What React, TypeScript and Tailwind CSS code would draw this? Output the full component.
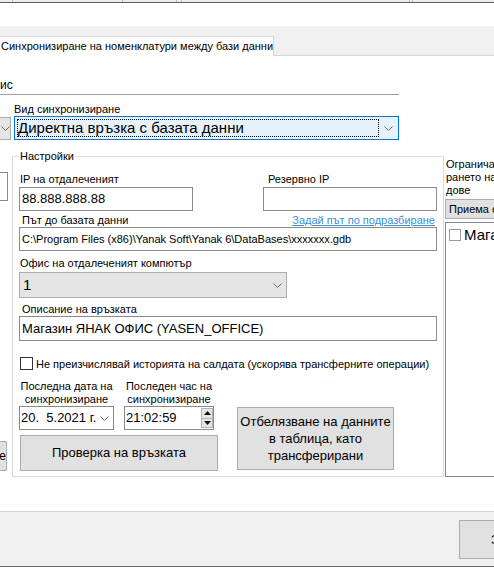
import React from 'react';

const Chevron = ({ className = '' }: { className?: string }) => (
  <svg width="9" height="5" viewBox="0 0 9 5" className={className}>
    <polyline points="0.5,0.5 4.5,4.5 8.5,0.5" fill="none" stroke="#6a6a6a" strokeWidth="1" />
  </svg>
);

const Spinner = () => (
  <div className="w-[12px] h-[20px] flex flex-col border border-[#b5b5b5]">
    <div className="flex-1 bg-[#e6e6e6] border-b border-[#b5b5b5] flex items-center justify-center">
      <svg width="7" height="4" viewBox="0 0 7 4">
        <polygon points="0,4 3.5,0 7,4" fill="#111" />
      </svg>
    </div>
    <div className="flex-1 bg-[#e6e6e6] flex items-center justify-center">
      <svg width="7" height="4" viewBox="0 0 7 4">
        <polygon points="0,0 3.5,4 7,0" fill="#111" />
      </svg>
    </div>
  </div>
);

export default function App() {
  return (
    <div className="w-[494px] h-[567px] overflow-hidden bg-white text-[11px] leading-[14px] text-black flex flex-col font-['Liberation_Sans',Arial,sans-serif]">
      {/* горна лента */}
      <div className="h-[3px] shrink-0 flex bg-[#ececec] border-b border-[#5f5f5f]">
        <div className="w-[13px] border-r border-[#bdbdbd]" />
        <div className="w-[110px] border-r border-[#bdbdbd]" />
        <div className="w-[54px] border-r border-[#bdbdbd]" />
        <div className="w-[5px] border-r border-[#bdbdbd]" />
        <div className="w-[228px] border-r border-[#bdbdbd]" />
        <div className="w-[3px] border-r border-[#bdbdbd]" />
      </div>
      <div className="h-[23px] shrink-0" />

      {/* табове */}
      <div className="h-[30px] shrink-0 bg-[#f0f0f0] border-b border-[#d9d9d9] flex items-end">
        <div className="w-[274px] h-[20px] -mb-px bg-white border-t border-r border-[#d9d9d9] pl-[1px] pt-[2px] text-[11px] whitespace-nowrap">
          Синхронизиране на номенклатури между бази данни
        </div>
      </div>

      {/* съдържание */}
      <div className="flex-1 flex flex-col overflow-hidden">
        <div className="mt-[22px] h-[14px] text-[12px] whitespace-nowrap">ис</div>
        <div className="mt-[2px] w-[399px] h-px bg-[#a0a0a0]" />

        {/* Вид синхронизиране */}
        <div className="mt-[7px] flex items-end">
          <div className="w-[11px] h-[23px] bg-[#e5e5e5] border border-l-0 border-[#adadad] flex items-center pl-[1px]">
            <Chevron />
          </div>
          <div className="ml-[3px] flex flex-col">
            <div className="h-[14px] whitespace-nowrap">Вид синхронизиране</div>
            <div className="w-[385px] h-[24px] bg-[#e5f1fb] border border-[#0078d7] flex items-center p-[2px]">
              <div className="w-[362px] h-full border border-dotted border-black flex items-center text-[15px] whitespace-nowrap">
                Директна връзка с базата данни
              </div>
              <div className="flex-1 flex justify-center pl-[1px]">
                <Chevron />
              </div>
            </div>
          </div>
        </div>

        <div className="mt-[9px] flex items-start">
          {/* лява колона (отрязана) */}
          <div className="w-[12px] shrink-0 flex flex-col">
            <div className="mt-[23px] w-[8px] h-[29px] bg-white border border-l-0 border-[#8a8a8a]" />
            <div className="mt-[240px] w-[7px] h-[30px] bg-[#e1e1e1] border border-l-0 border-[#adadad] flex items-center justify-end text-[12px]">
              е
            </div>
          </div>

          {/* Настройки */}
          <fieldset className="w-[432px] min-w-0 shrink-0 border border-[#dcdcdc] px-0 pb-[5px]">
            <legend className="ml-[6px] px-[1px] h-[14px] leading-[14px]">Настройки</legend>
            <div className="pl-[6px] flex flex-col">
              <div className="mt-[9px] flex gap-[70px]">
                <div className="w-[174px] flex flex-col">
                  <div className="h-[14px] pl-[1px] whitespace-nowrap">IP на отдалеченият</div>
                  <div className="mt-px h-[24px] border border-[#8a8a8a] flex items-center pl-[2px] text-[13px]">
                    88.888.888.88
                  </div>
                </div>
                <div className="w-[174px] flex flex-col">
                  <div className="h-[14px] pl-[5px] whitespace-nowrap">Резервно IP</div>
                  <div className="mt-px h-[24px] border border-[#8a8a8a]" />
                </div>
              </div>

              <div className="mt-[3px] w-[418px] h-[13px] leading-[13px] flex justify-between whitespace-nowrap">
                <span className="pl-[3px]">Път до базата данни</span>
                <span className="pr-[2px] text-[#3b8fd9] underline">Задай път по подразбиране</span>
              </div>
              <div className="w-[418px] h-[24px] border border-[#8a8a8a] flex items-center pl-[2px] whitespace-nowrap overflow-hidden">
                C:\Program Files (x86)\Yanak Soft\Yanak 6\DataBases\xxxxxxx.gdb
              </div>

              <div className="mt-[5px] h-[14px] pl-[1px] whitespace-nowrap">Офис на отдалеченият компютър</div>
              <div className="mt-[2px] w-[268px] h-[26px] bg-[#e5e5e5] border border-[#adadad] flex items-center pl-[3px] text-[15px]">
                <span className="flex-1">1</span>
                <Chevron className="mr-[4px]" />
              </div>

              <div className="mt-[5px] h-[13px] leading-[13px] pl-[3px] whitespace-nowrap">Описание на връзката</div>
              <div className="w-[418px] h-[25px] border border-[#8a8a8a] flex items-center pl-[2px] text-[13px] whitespace-nowrap">
                Магазин ЯНАК ОФИС (YASEN_OFFICE)
              </div>

              <div className="mt-[16px] h-[13px] flex items-center">
                <div className="ml-[1px] w-[13px] h-[13px] border border-[#333] bg-white shrink-0" />
                <span className="ml-[3px] whitespace-nowrap">
                  Не преизчислявай историята на салдата (ускорява трансферните операции)
                </span>
              </div>

              <div className="mt-[10px] flex items-start">
                <div className="flex flex-col">
                  <div className="flex gap-[10px] leading-[13px] text-center whitespace-nowrap">
                    <div className="w-[95px]">
                      Последна дата на
                      <br />
                      синхронизиране
                    </div>
                    <div className="w-[90px]">
                      Последен час на
                      <br />
                      синхронизиране
                    </div>
                  </div>
                  <div className="flex gap-[10px]">
                    <div className="w-[95px] h-[24px] border border-[#8a8a8a] flex items-center pl-[1px] text-[13px]">
                      <span className="flex-1 whitespace-pre">20.  5.2021 г.</span>
                      <Chevron className="mr-[4px]" />
                    </div>
                    <div className="w-[90px] h-[24px] border border-[#8a8a8a] flex items-center pl-[1px] text-[13px]">
                      <span className="flex-1">21:02:59</span>
                      <Spinner />
                    </div>
                  </div>
                  <button className="mt-[5px] ml-[1px] w-[198px] h-[36px] bg-[#e1e1e1] border border-[#adadad] text-[13px]">
                    Проверка на връзката
                  </button>
                </div>
                <button className="mt-[27px] ml-[19px] w-[157px] h-[63px] bg-[#e1e1e1] border border-[#adadad] text-[13px] leading-[17px] whitespace-nowrap">
                  Отбелязване на данните
                  <br />
                  в таблица, като
                  <br />
                  трансферирани
                </button>
              </div>
            </div>
          </fieldset>

          {/* дясна колона (отрязана) */}
          <div className="ml-[1px] w-[60px] shrink-0 flex flex-col pt-[9px] whitespace-nowrap leading-[13px]">
            <div className="pl-[1px]">Огранича</div>
            <div className="pl-[1px]">рането на</div>
            <div className="pl-[1px]">дове</div>
            <div className="mt-[2px] h-[20px] bg-[#e1e1e1] border border-[#adadad] flex items-center pl-[3px]">
              Приема с
            </div>
            <div className="mt-[3px] h-[255px] border border-[#828790] bg-white pt-[5px] pl-[3px]">
              <div className="flex items-center text-[15px] leading-[14px]">
                <div className="w-[12px] h-[12px] border border-[#9a9a9a] shrink-0" />
                <span className="ml-[3px]">Мага</span>
              </div>
            </div>
          </div>
        </div>
      </div>

      {/* долна лента */}
      <div className="h-[56px] shrink-0 bg-[#f0f0f0] border-t border-[#d5d5d5] border-b border-b-[#6b6b6b]">
        <div className="mt-[8px] ml-[459px] w-[80px] h-[39px] bg-[#e1e1e1] border border-[#adadad] flex items-center pl-[31px] text-[13px] whitespace-nowrap">
          З
        </div>
      </div>
    </div>
  );
}
